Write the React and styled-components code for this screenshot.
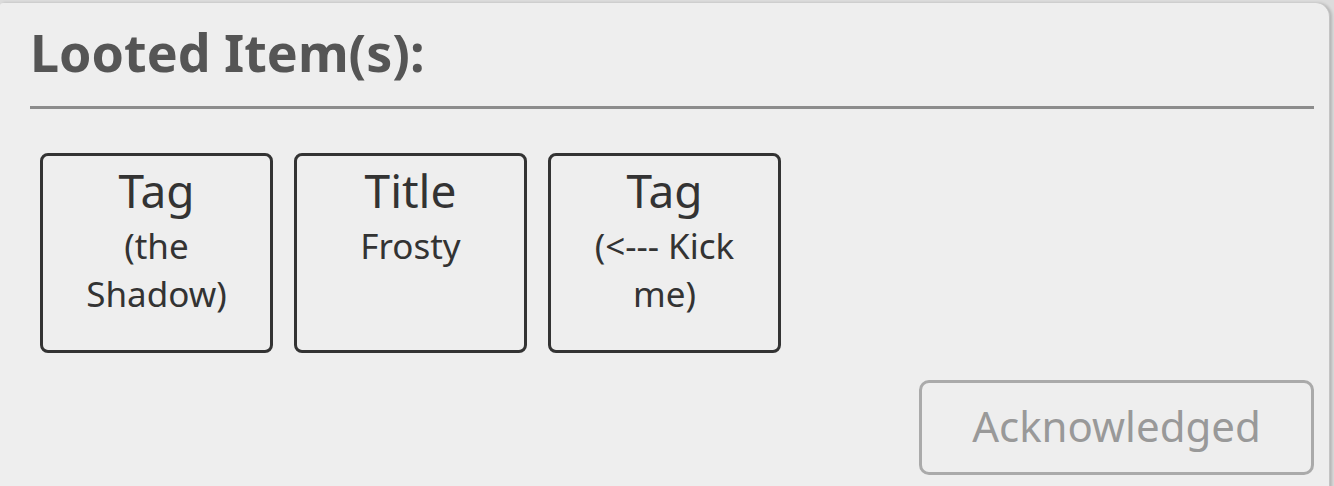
import React from 'react'
import styled, { createGlobalStyle } from 'styled-components'

const GlobalStyle = createGlobalStyle`
  html, body {
    margin: 0;
    padding: 0;
    background: #dcdcdc;
    font-family: "Noto Sans", "Open Sans", sans-serif;
    overflow: hidden;
  }
`

const items = [
  { kind: 'Tag', label: '(the Shadow)' },
  { kind: 'Title', label: 'Frosty' },
  { kind: 'Tag', label: '(<--- Kick me)' },
]

function App() {
  return (
    <>
      <GlobalStyle />
      <Panel>
        <Heading>Looted Item(s):</Heading>
        <Rule />
        <ItemRow>
          {items.map((item, i) => (
            <ItemCard key={i}>
              <ItemKind>{item.kind}</ItemKind>
              <ItemLabel>{item.label}</ItemLabel>
            </ItemCard>
          ))}
        </ItemRow>
        <Footer>
          <AckButton disabled>Acknowledged</AckButton>
        </Footer>
      </Panel>
    </>
  )
}

export default App

const Panel = styled.div`
  margin-top: 3px;
  width: 1330px;
  min-height: 500px;
  box-sizing: border-box;
  background: #eeeeee;
  border-radius: 3px 14px 0 0;
  border-right: 1px solid #c4c4c4;
  box-shadow: 2px 0 3px rgba(0, 0, 0, 0.18);
  padding: 9px 15px 0 30px;
`

const Heading = styled.h1`
  margin: 0;
  font-size: 52px;
  font-weight: 700;
  color: #555555;
  line-height: 80px;
`

const Rule = styled.div`
  margin-top: 14px;
  height: 3px;
  background: #8c8c8c;
`

const ItemRow = styled.div`
  display: flex;
  gap: 21px;
  margin-top: 44px;
  padding-left: 10px;
`

const ItemCard = styled.div`
  width: 233px;
  height: 200px;
  box-sizing: border-box;
  border: 3px solid #333333;
  border-radius: 8px;
  padding: 3px 10px 0;
  text-align: center;
  color: #333333;
`

const ItemKind = styled.div`
  font-size: 46px;
  line-height: 63px;
`

const ItemLabel = styled.div`
  font-size: 35px;
  line-height: 48px;
`

const Footer = styled.div`
  display: flex;
  justify-content: flex-end;
  margin-top: 27px;
`

const AckButton = styled.button`
  width: 395px;
  height: 95px;
  box-sizing: border-box;
  border: 3px solid #aaaaaa;
  border-radius: 10px;
  background: #eeeeee;
  color: #999999;
  font-family: "Noto Sans", "Open Sans", sans-serif;
  font-size: 42px;
  padding: 0 0 4px;
`
